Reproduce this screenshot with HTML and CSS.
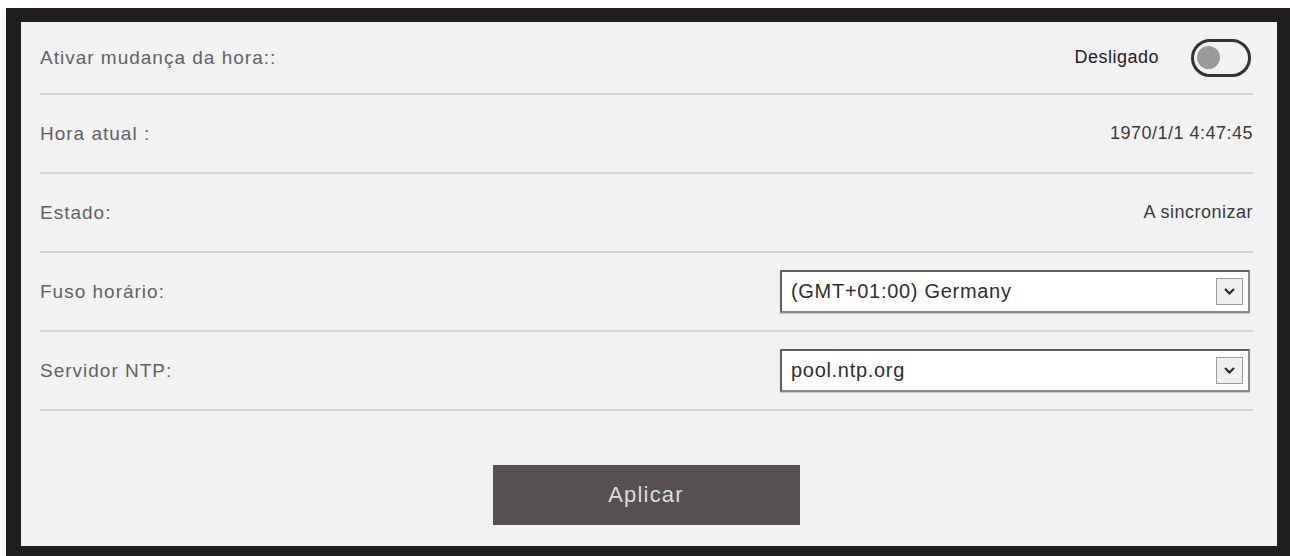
FILE: index.html
```html
<!DOCTYPE html>
<html lang="pt">
<head>
  <meta charset="UTF-8">
  <meta name="viewport" content="width=device-width, initial-scale=1.0">
  <title>Data e hora</title>
  <link rel="stylesheet" href="styles.css">
</head>
<body>

<div class="frame">
  <div class="panel">

    <!-- Daylight saving switch -->
    <div class="row row-first">
      <span class="label">Ativar mudança da hora::</span>
      <div class="switch-wrap">
        <span class="value state">Desligado</span>
        <span class="switch"><span class="knob"></span></span>
      </div>
    </div>

    <div class="row">
      <span class="label">Hora atual :</span>
      <span class="value">1970/1/1 4:47:45</span>
    </div>

    <div class="row">
      <span class="label">Estado:</span>
      <span class="value">A sincronizar</span>
    </div>

    <div class="row">
      <span class="label">Fuso horário:</span>
      <div class="select">
        <span class="select-text">(GMT+01:00) Germany</span>
        <span class="select-arrow">
          <svg width="13" height="9" viewBox="0 0 13 9"><path d="M2 2 L6.5 6.5 L11 2" fill="none" stroke="#2a2a2a" stroke-width="2.2"/></svg>
        </span>
      </div>
    </div>

    <div class="row">
      <span class="label">Servidor NTP:</span>
      <div class="select">
        <span class="select-text">pool.ntp.org</span>
        <span class="select-arrow">
          <svg width="13" height="9" viewBox="0 0 13 9"><path d="M2 2 L6.5 6.5 L11 2" fill="none" stroke="#2a2a2a" stroke-width="2.2"/></svg>
        </span>
      </div>
    </div>

    <div class="actions">
      <button class="btn-apply">Aplicar</button>
    </div>

  </div>
</div>

</body>
</html>
```

FILE: styles.css
```css
/* Reset */
html, body {
  margin: 0;
  padding: 0;
  background: #ffffff;
}

body {
  font-family: "Liberation Sans", Arial, sans-serif;
  padding: 8px 0 0 6px;
}

/* Dark outer frame */
.frame {
  border-style: solid;
  border-color: #1f1d1e;
  border-width: 14px 13px 10px 15px;
  height: 524px;
  box-sizing: content-box;
}

.panel {
  background: #f2f2f2;
  height: 100%;
  padding: 0 24px 0 19px;
  display: flex;
  flex-direction: column;
}

/* Setting rows */
.row {
  display: flex;
  align-items: center;
  justify-content: space-between;
  height: 77px;
  border-bottom: 2px solid #d5d5d5;
  flex-shrink: 0;
}

.row-first {
  height: 71px;
}

.label {
  font-size: 19px;
  letter-spacing: 1px;
  color: #626262;
}

.value {
  font-size: 18px;
  letter-spacing: 0.5px;
  color: #3a3a3a;
}

.state {
  color: #222;
}

/* On/off switch */
.switch-wrap {
  display: flex;
  align-items: center;
  gap: 32px;
}

.switch {
  display: flex;
  align-items: center;
  width: 48px;
  height: 32px;
  border: 3px solid #333;
  border-radius: 20px;
  padding: 0 3px;
  box-sizing: content-box;
  margin-right: 2px;
}

.knob {
  width: 23px;
  height: 23px;
  border-radius: 50%;
  background: #9a9a9a;
}

/* Dropdowns */
.select {
  width: 452px;
  height: 39px;
  background: #fff;
  border: 2px solid #8a8a8a;
  border-top-color: #5e5e5e;
  border-left-color: #5e5e5e;
  display: flex;
  align-items: center;
  justify-content: space-between;
  padding: 0 5px 0 9px;
  margin-right: 3px;
  box-sizing: content-box;
  box-shadow: 0 1px 1px #c8c8c8;
}

.select-text {
  font-size: 20px;
  letter-spacing: 0.7px;
  color: #2e2e2e;
}

.select-arrow {
  width: 25px;
  height: 25px;
  border: 1px solid #9c9c9c;
  background: #efefef;
  display: flex;
  align-items: center;
  justify-content: center;
}

/* Apply button */
.actions {
  display: flex;
  justify-content: center;
  padding-top: 54px;
}

.btn-apply {
  width: 307px;
  height: 60px;
  border: none;
  background: #555152;
  color: #dcdcdc;
  font-family: "Liberation Sans", Arial, sans-serif;
  font-size: 22px;
  letter-spacing: 1.2px;
  margin-left: -1px;
}
```
